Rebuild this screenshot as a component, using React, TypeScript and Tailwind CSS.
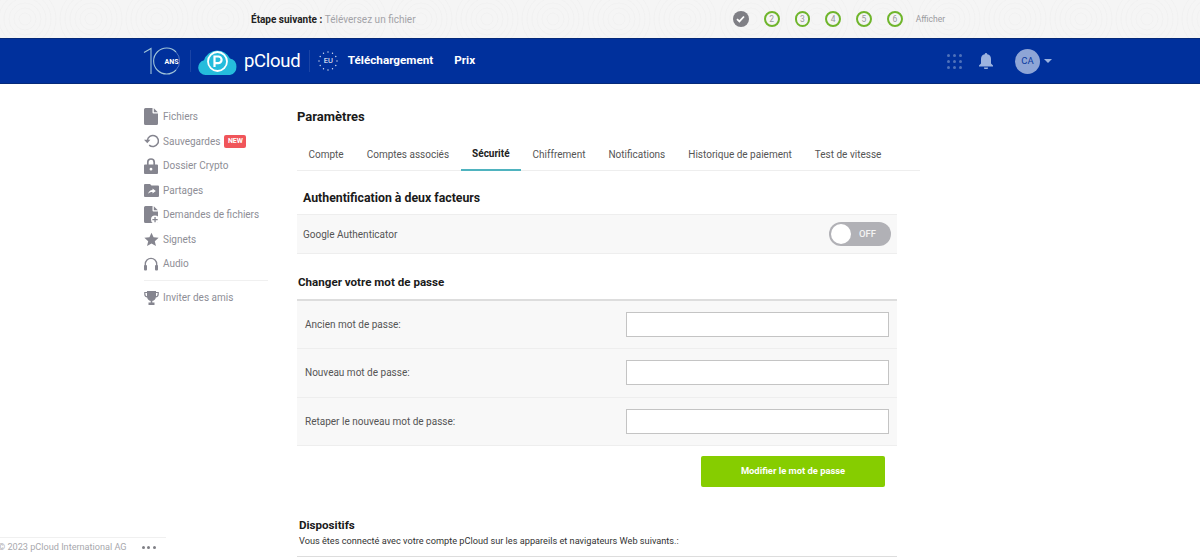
import React from "react";

const font = { fontFamily: "Roboto, 'Liberation Sans', sans-serif" };

function FileIcon({ plus = false }: { plus?: boolean }) {
  return (
    <svg width="14" height="17" viewBox="0 0 14 17" fill="#85858f">
      <path d="M1.5 0H8.5V4.5a1 1 0 0 0 1 1H14V15.5a1.5 1.5 0 0 1-1.5 1.5H1.5A1.5 1.5 0 0 1 0 15.5V1.5A1.5 1.5 0 0 1 1.5 0Z" />
      <path d="M9.8 0.2 13.8 4.2H9.8Z" />
      {plus && <circle cx="11" cy="13.5" r="4" fill="#fff" />}
      {plus && <path d="M10.4 11h1.3v2h2v1.3h-2v2h-1.3v-2h-2V13h2Z" />}
    </svg>
  );
}

const icons: Record<string, React.ReactNode> = {
  file: <FileIcon />,
  backup: (
    <svg width="15" height="14" viewBox="0 0 15 14" fill="none" stroke="#85858f" strokeWidth="1.5">
      <path d="M3.4 6.500a5.500 5.500 0 1 1 1.800 4.600" />
      <path d="M0 5.800h6.400L3.300 9.300Z" fill="#85858f" stroke="none" />
    </svg>
  ),
  lock: (
    <svg width="14" height="16" viewBox="0 0 14 16" fill="#85858f">
      <path d="M3.800 7V4.200a3.200 3.200 0 0 1 6.400 0V7" fill="none" stroke="#85858f" strokeWidth="1.700" />
      <path fillRule="evenodd" d="M1 6.500h12a1 1 0 0 1 1 1V15a1 1 0 0 1-1 1H1a1 1 0 0 1-1-1V7.500a1 1 0 0 1 1-1ZM7 9.800a1.400 1.400 0 1 0 0 2.800 1.400 1.400 0 0 0 0-2.800Z" />
    </svg>
  ),
  share: (
    <svg width="15" height="13" viewBox="0 0 15 13" fill="#85858f">
      <path fillRule="evenodd" d="M1 0H6L7.500 1.500H14a1 1 0 0 1 1 1V12a1 1 0 0 1-1 1H1a1 1 0 0 1-1-1V1a1 1 0 0 1 1-1ZM8.500 4.500V6C6 6.200 4.500 7.600 4 10c1.100-1.400 2.500-2 4.500-2v1.600L11.800 7Z" />
    </svg>
  ),
  request: <FileIcon plus />,
  star: (
    <svg width="15" height="15" viewBox="0 0 24 24" fill="#85858f">
      <path d="M12 1l3.300 7.400 8.100.8-6.100 5.400 1.800 7.900L12 18.400l-7.100 4.100 1.800-7.900L.6 9.200l8.100-.8Z" />
    </svg>
  ),
  audio: (
    <svg width="14" height="14" viewBox="0 0 14 14" fill="none">
      <path d="M1.300 9V7a5.700 5.700 0 0 1 11.400 0v2" stroke="#85858f" strokeWidth="1.300" />
      <rect x="0" y="8" width="3" height="5.500" rx="1" fill="#85858f" />
      <rect x="11" y="8" width="3" height="5.500" rx="1" fill="#85858f" />
    </svg>
  ),
  trophy: (
    <svg width="15" height="14" viewBox="0 0 15 14" fill="#85858f">
      <path d="M3 0h9v5.500a4.500 4.500 0 0 1-9 0Z" />
      <path d="M3 1.500H.8V3a3 3 0 0 0 2.700 3M12 1.500h2.200V3a3 3 0 0 1-2.700 3" fill="none" stroke="#85858f" strokeWidth="1.200" />
      <path d="M6.700 9.500h1.600v2.200H6.700ZM4.500 11.500h6V14h-6Z" />
    </svg>
  ),
};

const navItems = [
  { icon: "file", label: "Fichiers" },
  { icon: "backup", label: "Sauvegardes", badge: true },
  { icon: "lock", label: "Dossier Crypto" },
  { icon: "share", label: "Partages" },
  { icon: "request", label: "Demandes de fichiers" },
  { icon: "star", label: "Signets" },
  { icon: "audio", label: "Audio" },
];

const tabs = ["Compte", "Comptes associés", "Sécurité", "Chiffrement", "Notifications", "Historique de paiement", "Test de vitesse"];
const fields = ["Ancien mot de passe:", "Nouveau mot de passe:", "Retaper le nouveau mot de passe:"];

function NavRow({ icon, label, badge }: { icon: string; label: string; badge?: boolean }) {
  return (
    <div className="flex h-[24.5px] items-center">
      <div className="flex w-[19px] shrink-0 items-center justify-start">{icons[icon]}</div>
      <span className="text-[10px] text-[#8e8e96]">{label}</span>
      {badge && (
        <span className="ml-[4px] flex h-[13px] w-[22px] items-center justify-center rounded-[2px] bg-[#f0555a] text-[7px] font-bold text-white">NEW</span>
      )}
    </div>
  );
}

function TopPattern() {
  return (
    <svg className="absolute inset-0" width="1200" height="38">
      <defs>
        <pattern id="rings" width="66" height="66" patternUnits="userSpaceOnUse" patternTransform="translate(-8 -14)">
          {[6, 11, 16, 21, 26, 31].map((r) => (
            <circle key={r} cx="33" cy="33" r={r} fill="none" stroke="#f0f0f0" strokeWidth="0.800" />
          ))}
        </pattern>
      </defs>
      <rect width="1200" height="38" fill="url(#rings)" />
    </svg>
  );
}

const euDots = Array.from({ length: 12 }).map((_, i) => {
  const a = (i / 12) * Math.PI * 2;
  return { x: 10 + 9 * Math.cos(a), y: 10 + 9 * Math.sin(a) };
});

export default function App() {
  return (
    <div className="flex h-[557px] w-[1200px] flex-col overflow-hidden bg-white" style={font}>
      {/* Step bar */}
      <div className="relative h-[38px] shrink-0 bg-[#f5f5f5]">
        <TopPattern />
        <div className="relative flex h-full items-center">
          <div className="ml-[251px] w-[482px] text-[10px] text-[#a3a3a8]">
            <span className="font-bold text-[#222]">Étape suivante : </span>Téléversez un fichier
          </div>
          <div className="flex w-[212px] items-center">
            <div className="flex h-[16px] w-[16px] items-center justify-center rounded-full bg-[#7f7f85]">
              <svg width="9" height="8" viewBox="0 0 9 8" fill="none" stroke="#fff" strokeWidth="1.800">
                <path d="M1 4.200 3.400 6.400 8 1.500" />
              </svg>
            </div>
            {[2, 3, 4, 5, 6].map((n) => (
              <div key={n} className="ml-[15px] flex h-[16px] w-[16px] items-center justify-center rounded-full border-2 border-[#6fb52c] text-[8.500px] text-[#9a9aa0]">
                {n}
              </div>
            ))}
            <span className="ml-[13px] text-[8.500px] text-[#9a9aa0]">Afficher</span>
          </div>
        </div>
      </div>

      {/* Header */}
      <div className="flex h-[46px] shrink-0 items-center border-y border-y-[#052a7a] bg-[#00309c]">
        <div className="ml-[143px] flex items-center">
          <svg width="40" height="28" viewBox="0 0 40 28" fill="none">
            <path d="M1 5.500 8 1.500V27" stroke="#9fc4d8" strokeWidth="1.100" />
            <path d="M33 5A13 13 0 1 0 33 23" stroke="#9fc4d8" strokeWidth="1.100" />
            <path d="M33 5A13 13 0 0 1 33 23" stroke="#4d74c0" strokeWidth="1" />
            <text x="21.500" y="16.500" fill="#fff" fontSize="7" fontWeight="700" fontFamily="Roboto, sans-serif">ANS</text>
          </svg>
          <div className="ml-[7px] h-[22px] w-px bg-[#1a44a6]" />
          <svg className="ml-[7px]" width="40" height="27" viewBox="0 0 40 27">
            <path d="M7.500 27a7.500 7.500 0 0 1-1.500-14.800A14 14 0 0 1 32 10.500 8.500 8.500 0 0 1 32 27Z" fill="#25bcdc" />
            <circle cx="19.500" cy="13.500" r="9.500" fill="none" stroke="#fff" strokeWidth="1.800" />
            <path d="M16.500 19V8.500h3.800a3.300 3.300 0 0 1 0 6.600h-3.800" fill="none" stroke="#fff" strokeWidth="2.200" />
          </svg>
          <span className="ml-[6px] text-[18.500px] leading-none tracking-[-0.3px] text-white">pCloud</span>
          <div className="ml-[9px] h-[22px] w-px bg-[#1a44a6]" />
          <div className="relative ml-[8px] flex h-[20px] w-[20px] items-center justify-center text-[7.500px] text-white">
            <svg className="absolute inset-0" width="20" height="20" viewBox="0 0 20 20">
              {euDots.map((d, i) => (
                <circle key={i} cx={d.x} cy={d.y} r="0.700" fill="#d8e0f2" />
              ))}
            </svg>
            EU
          </div>
          <span className="ml-[9.500px] text-[11.700px] font-bold text-white">Téléchargement</span>
          <span className="ml-[21px] text-[11.700px] font-bold text-white">Prix</span>
        </div>
        <div className="ml-auto flex items-center">
          <div className="grid grid-cols-3 gap-[3px]">
            {Array.from({ length: 9 }).map((_, i) => (
              <span key={i} className="h-[3px] w-[3px] rounded-full bg-[#4f72ba]" />
            ))}
          </div>
          <svg className="ml-[17px]" width="14" height="16" viewBox="0 0 14 16" fill="#9cb3e0">
            <path d="M7 0a1.200 1.200 0 0 1 1.200 1.300A4.800 4.800 0 0 1 12 6v4.500l2 2V13.500H0v-1l2-2V6a4.800 4.800 0 0 1 3.800-4.700A1.200 1.200 0 0 1 7 0Z" />
            <path d="M5 14.500h4a2 2 0 0 1-4 0Z" />
          </svg>
          <div className="ml-[22px] flex h-[25px] w-[25px] items-center justify-center rounded-full bg-[#8ea5d6] text-[9.500px] text-[#0a3aa0]">CA</div>
          <div className="ml-[4px] mr-[148px] h-0 w-0 border-x-[4px] border-t-[4px] border-x-transparent border-t-[#9cb3e0]" />
        </div>
      </div>

      {/* Body */}
      <div className="flex min-h-0 flex-1">
        <aside className="flex w-[297px] shrink-0 flex-col">
          <div className="ml-[144px] mt-[20.500px] w-[124px]">
            {navItems.map((n) => (
              <NavRow key={n.label} {...n} />
            ))}
            <div className="mt-[4px] mb-[4.500px] h-px bg-[#f0f0f0]" />
            <NavRow icon="trophy" label="Inviter des amis" />
          </div>
          <div className="mt-auto flex h-[20px] w-[166px] items-center border-t border-t-[#f0f0f0]">
            <span className="ml-[-2px] text-[9.150px] text-[#a8a8ad]">© 2023 pCloud International AG</span>
            <div className="ml-[15px] flex gap-[2.500px]">
              <span className="h-[3px] w-[3px] rounded-full bg-[#7f7f85]" />
              <span className="h-[3px] w-[3px] rounded-full bg-[#7f7f85]" />
              <span className="h-[3px] w-[3px] rounded-full bg-[#7f7f85]" />
            </div>
          </div>
        </aside>

        <main className="w-[623px]">
          <h1 className="mt-[24px] text-[13px] leading-[18px] font-bold text-[#1a1a1a]">Paramètres</h1>
          <div className="mt-[12px] flex h-[33px] border-b border-b-[#eeeeee]">
            {tabs.map((t) => {
              const active = t === "Sécurité";
              return (
                <div
                  key={t}
                  className={
                    active
                      ? "flex h-[33px] items-center border-b-2 border-b-[#4fb3bf] px-[11.500px] text-[10px] font-bold text-[#222]"
                      : "flex h-[32px] items-center px-[11.500px] text-[10px] text-[#555]"
                  }
                >
                  {t}
                </div>
              );
            })}
          </div>

          <div className="w-[600px]">
            <h2 className="mt-[18px] ml-[6px] text-[12.300px] leading-[18px] font-bold text-[#1a1a1a]">Authentification à deux facteurs</h2>
            <div className="mt-[7px] flex h-[40px] items-center justify-between border-y border-y-[#eeeeee] bg-[#f8f8f8] px-[6px]">
              <span className="text-[10px] text-[#555]">Google Authenticator</span>
              <div className="flex h-[24px] w-[62px] items-center rounded-full bg-[#b1b1b6] pl-[2px]">
                <div className="h-[20px] w-[20px] rounded-full bg-white" />
                <span className="ml-[8px] text-[9.500px] font-medium text-[#f4f4f4]">OFF</span>
              </div>
            </div>

            <h2 className="mt-[19px] ml-[1px] text-[11.600px] leading-[18px] font-bold text-[#1a1a1a]">Changer votre mot de passe</h2>
            <div className="mt-[8px] border-t-2 border-t-[#dddddd]">
              {fields.map((f) => (
                <div key={f} className="flex h-[48.300px] items-center justify-between border-b border-b-[#eeeeee] bg-[#f8f8f8] px-[8px]">
                  <span className="text-[10px] text-[#555]">{f}</span>
                  <input className="h-[25px] w-[263.500px] border border-[#c4c4c4] bg-white" />
                </div>
              ))}
            </div>
            <div className="mt-[10px] flex justify-end pr-[12px]">
              <button className="h-[31px] w-[184px] rounded-[2px] bg-[#86cd00] text-[9.400px] font-bold text-white">Modifier le mot de passe</button>
            </div>

            <h2 className="mt-[30px] ml-[2px] text-[11.600px] leading-[16px] font-bold text-[#1a1a1a]">Dispositifs</h2>
            <p className="ml-[2px] text-[9.200px] leading-[16px] text-[#333]">Vous êtes connecté avec votre compte pCloud sur les appareils et navigateurs Web suivants.:</p>
            <div className="mt-[7px] h-px bg-[#dddddd]" />
          </div>
        </main>
      </div>
    </div>
  );
}
